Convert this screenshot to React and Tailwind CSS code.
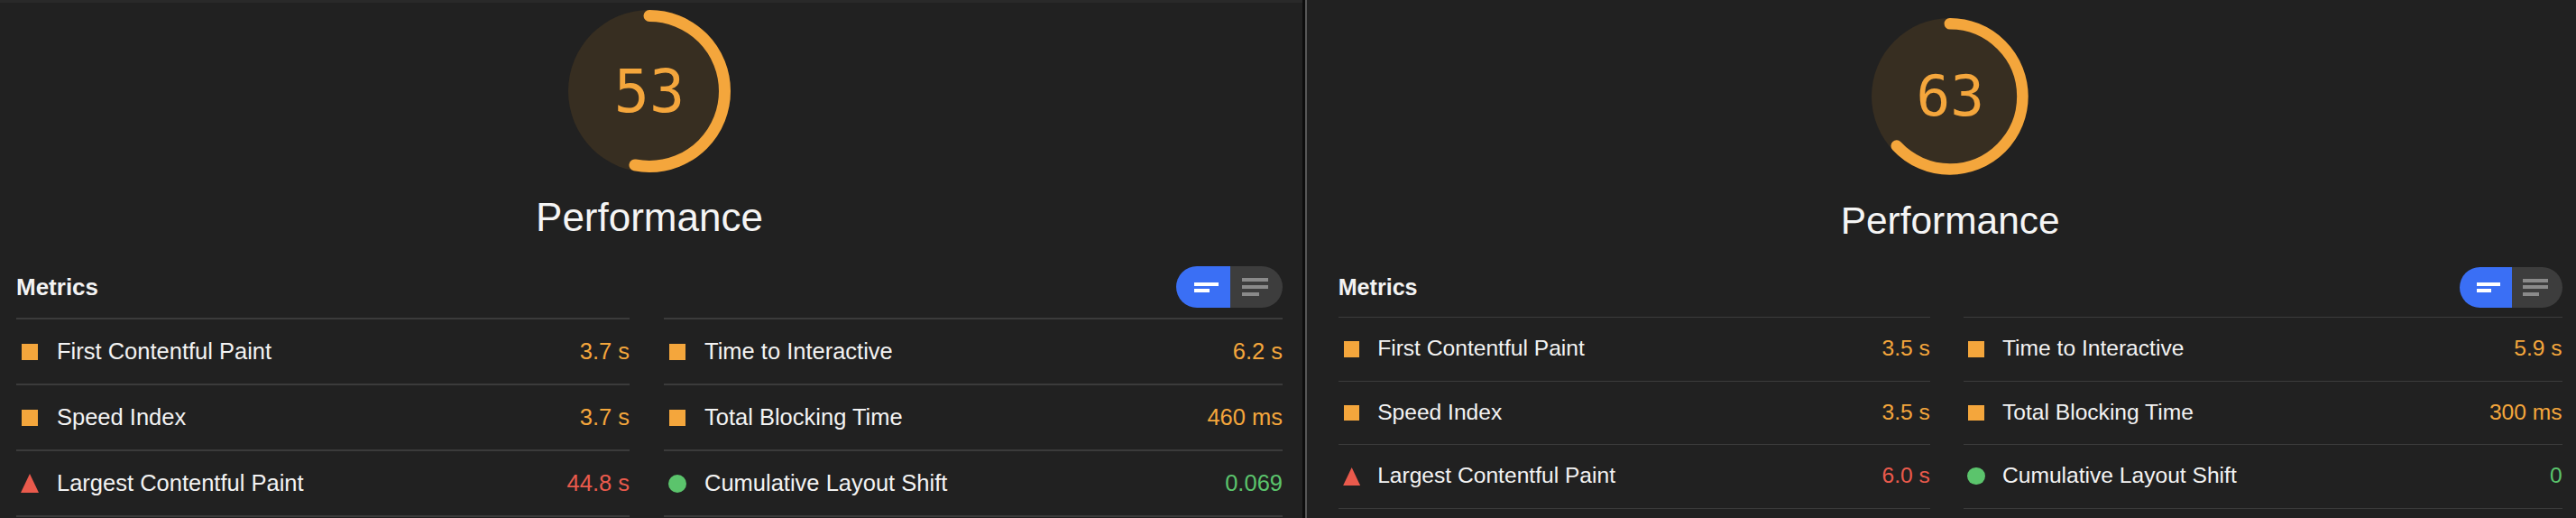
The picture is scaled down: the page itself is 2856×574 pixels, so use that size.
import React from 'react';

const panels = [
    {
        score: 53,
        outer: 'w-[1444px] pl-[18px] pr-[22px] pt-[8px] border-t-[3px] border-[#292929]',
        titleGap: 'mt-[28px]',
        headGap: 'mt-[32px]',
        metrics: [
            [
                { name: 'First Contentful Paint', value: '3.7 s', rating: 'average' },
                { name: 'Speed Index', value: '3.7 s', rating: 'average' },
                { name: 'Largest Contentful Paint', value: '44.8 s', rating: 'fail' },
            ],
            [
                { name: 'Time to Interactive', value: '6.2 s', rating: 'average' },
                { name: 'Total Blocking Time', value: '460 ms', rating: 'average' },
                { name: 'Cumulative Layout Shift', value: '0.069', rating: 'pass' },
            ],
        ],
    },
    {
        score: 63,
        outer: 'flex-1 pl-[36px] pr-[16px] pt-[21px] [zoom:0.965]',
        titleGap: 'mt-[31px]',
        headGap: 'mt-[31px]',
        metrics: [
            [
                { name: 'First Contentful Paint', value: '3.5 s', rating: 'average' },
                { name: 'Speed Index', value: '3.5 s', rating: 'average' },
                { name: 'Largest Contentful Paint', value: '6.0 s', rating: 'fail' },
            ],
            [
                { name: 'Time to Interactive', value: '5.9 s', rating: 'average' },
                { name: 'Total Blocking Time', value: '300 ms', rating: 'average' },
                { name: 'Cumulative Layout Shift', value: '0', rating: 'pass' },
            ],
        ],
    },
];

const valueColor = {
    average: 'text-[#f4a63c]',
    fail: 'text-[#ea5a4c]',
    pass: 'text-[#5bc46c]',
};

function Gauge({ score }) {
    const r = 83.5;
    const c = 2 * Math.PI * r;
    return (
        <div className="relative w-[180px] h-[180px]">
            <svg width="180" height="180" viewBox="0 0 180 180">
                <circle cx="90" cy="90" r="90" fill="#372e21" />
                <circle
                    cx="90"
                    cy="90"
                    r={r}
                    fill="none"
                    stroke="#f4a63c"
                    strokeWidth="13"
                    strokeLinecap="round"
                    strokeDasharray={`${(score / 100) * c} ${c}`}
                    transform="rotate(-90 90 90)"
                />
            </svg>
            <div className="absolute inset-0 flex items-center justify-center text-[65px] leading-none text-[#f4a63c] font-['DejaVu_Sans_Mono',monospace]">
                {score}
            </div>
        </div>
    );
}

function RatingIcon({ rating }) {
    if (rating === 'fail') {
        return (
            <svg width="20" height="21" viewBox="0 0 20 21" className="shrink-0">
                <polygon points="10,0 20,21 0,21" fill="#ea5a4c" />
            </svg>
        );
    }
    if (rating === 'pass') {
        return <div className="w-[20px] h-[20px] rounded-full bg-[#5bc46c] shrink-0" />;
    }
    return <div className="w-[18px] h-[18px] bg-[#f4a63c] shrink-0" />;
}

function MetricColumn({ items }) {
    return (
        <div className="flex flex-col">
            {items.map((m) => (
                <div key={m.name} className="h-[73px] border-t-2 border-[#3b3b3b] flex items-center pl-[5px]">
                    <div className="w-[20px] flex justify-center">
                        <RatingIcon rating={m.rating} />
                    </div>
                    <span className="ml-[20px] flex-1 text-[25.5px] text-[#f3f3f3]">{m.name}</span>
                    <span className={`text-[25.5px] ${valueColor[m.rating]}`}>{m.value}</span>
                </div>
            ))}
            <div className="h-[2px] bg-[#3b3b3b]" />
        </div>
    );
}

function Toggle() {
    return (
        <div className="flex h-[46px] w-[118px] rounded-full overflow-hidden">
            <div className="w-[60px] bg-[#3a6ff5] flex flex-col justify-center gap-[3px] pl-[20px]">
                <div className="w-[27px] h-[4px] bg-white" />
                <div className="w-[17px] h-[4px] bg-white" />
            </div>
            <div className="flex-1 bg-[#3d3d3d] flex flex-col justify-center gap-[4px] pl-[13px]">
                <div className="w-[29px] h-[4px] bg-[#8a8a8a]" />
                <div className="w-[29px] h-[4px] bg-[#8a8a8a]" />
                <div className="w-[19px] h-[4px] bg-[#8a8a8a]" />
            </div>
        </div>
    );
}

function Panel({ p }) {
    return (
        <div className={`bg-[#212121] h-full ${p.outer}`}>
            <div className="flex flex-col items-center">
                <Gauge score={p.score} />
                <div className={`${p.titleGap} text-[44px] leading-none text-[#f5f5f5]`}>Performance</div>
            </div>
            <div className={`${p.headGap} flex items-center justify-between h-[46px]`}>
                <span className="text-[26px] font-bold text-[#f3f3f3]">Metrics</span>
                <Toggle />
            </div>
            <div className="mt-[11px] grid grid-cols-[680px_1fr] gap-x-[38px]">
                <MetricColumn items={p.metrics[0]} />
                <MetricColumn items={p.metrics[1]} />
            </div>
        </div>
    );
}

export default function App() {
    return (
        <div className="flex w-[2856px] h-[574px] overflow-hidden bg-[#212121] font-['Liberation_Sans',Arial,sans-serif]">
            <Panel p={panels[0]} />
            <div className="w-[3px] bg-[#0d0d0d]" />
            <div className="w-[2px] bg-[#575757]" />
            <Panel p={panels[1]} />
        </div>
    );
}
